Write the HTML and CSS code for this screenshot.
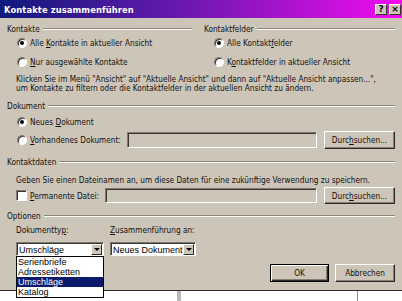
FILE: index.html
```html
<!DOCTYPE html>
<html lang="de">
<head>
<meta charset="utf-8">
<title>Kontakte zusammenführen</title>
<link rel="stylesheet" href="styles.css">
</head>
<body>
<div class="screen">
  <div class="dialog">
    <div class="titlebar">
      <span class="title">Kontakte zusammenführen</span>
      <span class="tbtns"><span class="tbtn">?</span><span class="tbtn">×</span></span>
    </div>
    <div class="content">
      <div class="cols">
        <div class="col left">
          <div class="ghead"><span>Kontakte</span><i class="etch"></i></div>
          <div class="opt r1"><span class="radio on"></span><span>Alle <u>K</u>ontakte in aktueller Ansicht</span></div>
          <div class="opt r2"><span class="radio"></span><span><u>N</u>ur ausgewählte Kontakte</span></div>
        </div>
        <div class="col right">
          <div class="ghead"><span>Kontaktfelder</span><i class="etch"></i></div>
          <div class="opt r1"><span class="radio on"></span><span>Alle Kontakt<u>f</u>elder</span></div>
          <div class="opt r2"><span class="radio"></span><span>K<u>o</u>ntaktfelder in aktueller Ansicht</span></div>
        </div>
      </div>
      <p class="note">Klicken Sie im Menü "Ansicht" auf "Aktuelle Ansicht" und dann auf "Aktuelle Ansicht anpassen...",<br>um Kontakte zu filtern oder die Kontaktfelder in der aktuellen Ansicht zu ändern.</p>

      <div class="ghead g-doc"><span>Dokument</span><i class="etch"></i></div>
      <div class="opt r-neu"><span class="radio on"></span><span>Neues <u>D</u>okument</span></div>
      <div class="opt r-vor">
        <span class="radio"></span><span><u>V</u>orhandenes Dokument:</span>
        <span class="field f-vor"></span>
        <span class="btn b-browse">Durc<u>h</u>suchen...</span>
      </div>

      <div class="ghead g-kd"><span>Kontaktdaten</span><i class="etch"></i></div>
      <div class="hint">Geben Sie einen Dateinamen an, um diese Daten für eine zukünftige Verwendung zu speichern.</div>
      <div class="opt r-perm">
        <span class="check"></span><span><u>P</u>ermanente Datei:</span>
        <span class="field f-perm"></span>
        <span class="btn b-browse b2">Durc<u>h</u>suchen...</span>
      </div>

      <div class="ghead g-opt"><span>Optionen</span><i class="etch"></i></div>
      <div class="labels">
        <span class="lab1">Dokumentty<u>p</u>:</span>
        <span><u>Z</u>usammenführung an:</span>
      </div>
      <div class="selects">
        <span class="select s1"><span class="sval">Umschläge</span><span class="arrow"><i></i></span></span>
        <span class="select s2"><span class="sval">Neues Dokument</span><span class="arrow"><i></i></span></span>
      </div>
      <div class="actions">
        <span class="btn ok">OK</span>
        <span class="btn cancel">Abbrechen</span>
      </div>
    </div>
  </div>
  <div class="behind"><i class="vl v1"></i><i class="vl v2"></i></div>
  <ul class="droplist">
    <li>Serienbriefe</li>
    <li>Adressetiketten</li>
    <li class="sel">Umschläge</li>
    <li>Katalog</li>
  </ul>
</div>
</body>
</html>
```

FILE: styles.css
```css
html, body { margin: 0; padding: 0; }
body {
  width: 402px; height: 301px; overflow: hidden; background: #fff;
  font-family: "DejaVu Sans Condensed", "DejaVu Sans", sans-serif;
  font-stretch: condensed; font-size: 8.2px; color: #111;
}
u { text-decoration: underline; text-underline-offset: 1px; }
.screen { position: relative; width: 402px; height: 301px; }

.dialog { height: 290px; background: #cdc5b8; border-bottom: 1px solid #2e2c2a; }

.titlebar {
  height: 18px; display: flex; align-items: center; justify-content: space-between;
  background: linear-gradient(90deg, #0e1a7c 0%, #7418b4 50%, #f20cf0 100%);
  padding: 0 1px 0 4px; box-sizing: border-box;
}
.title { color: #fff; font-weight: bold; font-size: 9.3px; letter-spacing: 0.1px; }
.tbtns { display: flex; gap: 2px; }
.tbtn {
  width: 12px; height: 11px; box-sizing: border-box; background: #cdc5b8;
  border-top: 1px solid #fff; border-left: 1px solid #fff;
  border-right: 1px solid #333; border-bottom: 1px solid #333;
  font: bold 9px "DejaVu Sans", sans-serif; line-height: 9px; text-align: center; color: #000;
}

.content { padding: 5px 7px 0 7px; }
.cols { display: flex; gap: 12px; }
.col.left { width: 185px; }
.col.right { flex: 1; }

.ghead { display: flex; align-items: center; height: 11px; }
.ghead .etch { flex: 1; margin-left: 3px; border-top: 1px solid #8c8579; border-bottom: 1px solid #fbfaf7; }

.opt { display: flex; align-items: center; height: 14px; padding-left: 10px; white-space: nowrap; }
.r1 { margin-top: 2px; }
.r2 { margin-top: 5px; }

.radio {
  width: 10px; height: 10px; box-sizing: border-box; border-radius: 50%;
  background: #fff; margin-right: 3px; position: relative; flex: none;
  border: 1px solid; border-color: #7d776d #fff #fff #7d776d;
  box-shadow: inset 1px 1px 0 #3a3834;
}
.radio.on::after {
  content: ""; position: absolute; left: 2px; top: 2px; width: 4px; height: 4px;
  border-radius: 50%; background: #000;
}
.check {
  width: 11px; height: 11px; box-sizing: border-box; background: #fff; margin-right: 3px; flex: none;
  border: 1px solid; border-color: #7d776d #fff #fff #7d776d;
  box-shadow: inset 1px 1px 0 #3a3834;
}

.note { margin: 6px 0 0 9px; line-height: 9px; white-space: nowrap; }

.g-doc { margin-top: 7px; }
.r-neu { margin-top: 4px; }
.r-vor { margin-top: 2px; height: 18px; }
.field {
  box-sizing: border-box; background: #cdc5b8; height: 16px;
  border: 1px solid; border-color: #7d776d #fff #fff #7d776d;
  box-shadow: inset 1px 1px 0 #3a3834;
}
.f-vor { margin-left: auto; width: 190px; }
.btn {
  box-sizing: border-box; display: flex; align-items: center; justify-content: center;
  background: #cdc5b8; color: #111; white-space: nowrap;
  border: 1px solid; border-color: #fff #2e2c2a #2e2c2a #fff;
  box-shadow: inset -1px -1px 0 #857e72;
}
.b-browse { width: 71px; height: 18px; margin-left: 7px; }

.g-kd { margin-top: 7px; }
.hint { margin-top: 8px; height: 10px; line-height: 10px; padding-left: 9px; white-space: nowrap; }
.r-perm { margin-top: 2px; height: 17px; padding-left: 9px; }
.f-perm { margin-left: auto; width: 212px; height: 15px; }
.b2 { height: 17px; }

.g-opt { margin-top: 6px; }
.labels { margin-top: 4px; height: 11px; line-height: 11px; display: flex; padding-left: 9px; white-space: nowrap; }
.lab1 { width: 94px; }
.selects { margin-top: 6px; display: flex; gap: 6px; padding-left: 9px; }
.select {
  box-sizing: border-box; height: 14px; background: #fff; display: flex; align-items: center;
  border: 1px solid; border-color: #7d776d #fff #fff #7d776d;
  box-shadow: inset 1px 1px 0 #3a3834; padding: 1px 1px 1px 2px;
  font: 9px "Liberation Sans", Arial, sans-serif; color: #000; white-space: nowrap; overflow: hidden;
}
.s1 { width: 88px; }
.s2 { width: 86px; }
.sval { flex: 1; padding-top: 1px; overflow: hidden; }
.arrow {
  width: 11px; height: 11px; box-sizing: border-box; background: #cdc5b8; position: relative; flex: none;
  border: 1px solid; border-color: #fff #2e2c2a #2e2c2a #fff;
}
.arrow i {
  position: absolute; left: 2px; top: 3px; width: 0; height: 0;
  border-left: 3px solid transparent; border-right: 3px solid transparent; border-top: 3px solid #000;
}

.actions { margin-top: 8px; display: flex; justify-content: flex-end; gap: 6px; }
.ok { width: 59px; height: 18px; border: 1px solid #000; box-shadow: inset 1px 1px 0 #fff, inset -1px -1px 0 #2e2c2a, inset -2px -2px 0 #857e72; }
.cancel { width: 60px; height: 18px; }

.behind { height: 10px; position: relative; }
.vl { position: absolute; top: 0; bottom: 0; background: #b9b9b9; }
.v1 { left: 177px; width: 4px; }
.v2 { left: 357px; width: 1px; background: #8f8f8f; }

.droplist {
  position: absolute; left: 16px; top: 256px; width: 88px; margin: 0; padding: 0;
  list-style: none; background: #fff; border: 1px solid #000; box-sizing: border-box;
  font: 9px "Liberation Sans", Arial, sans-serif; color: #000;
}
.droplist li { height: 10px; line-height: 10px; padding-left: 1px; }
.droplist li.sel { background: #0c1a6c; color: #fff; }
```
